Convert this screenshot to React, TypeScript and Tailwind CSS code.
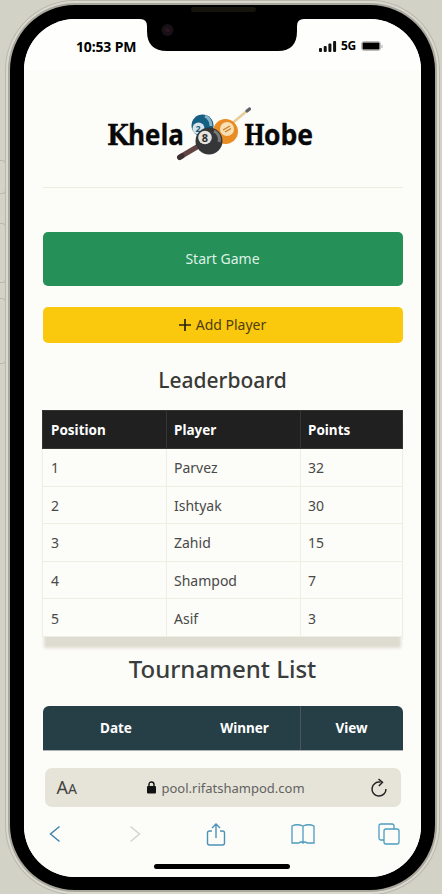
const players = [
  ["1", "Parvez", "32"],
  ["2", "Ishtyak", "30"],
  ["3", "Zahid", "15"],
  ["4", "Shampod", "7"],
  ["5", "Asif", "3"],
];

function Logo() {
  return (
    <svg className="h-[64px] w-[220px]" viewBox="0 0 220 64" role="img">
      <g fill="#080808" stroke="#080808" strokeWidth="0.3" fontWeight="700">
        <text x="6" y="43" fontSize="28" fontFamily="DejaVu Serif, serif" textLength="22" lengthAdjust="spacingAndGlyphs">K</text>
        <text x="27" y="43" fontSize="28" fontFamily="Open Sans, sans-serif" textLength="56" lengthAdjust="spacingAndGlyphs">hela</text>
        <text x="143" y="43" fontSize="28" fontFamily="DejaVu Serif, serif" textLength="21" lengthAdjust="spacingAndGlyphs">H</text>
        <text x="163" y="43" fontSize="28" fontFamily="Open Sans, sans-serif" textLength="49" lengthAdjust="spacingAndGlyphs">obe</text>
      </g>
      <path d="M128 24 L147 8" stroke="#e8cd98" strokeWidth="2.6" />
      <path d="M146 9 L148.5 7" stroke="#606068" strokeWidth="3.2" strokeLinecap="round" />
      <path d="M79 55 L101 42" stroke="#634443" strokeWidth="5" strokeLinecap="round" />
      <path d="M78.5 55.5 L81 54" stroke="#3d3033" strokeWidth="5" strokeLinecap="round" />
      <circle cx="101.500" cy="23.500" r="11" fill="#155f83" />
      <path d="M104 14 Q110 17 110 24" stroke="#86b4c5" strokeWidth="3" fill="none" />
      <circle cx="97.500" cy="26.500" r="6" fill="#d9e5ea" />
      <text x="94.500" y="30" fontSize="9" fontWeight="700" fontFamily="Open Sans, sans-serif" fill="#155f83">2</text>
      <circle cx="124.500" cy="29.500" r="12.500" fill="#e98c24" />
      <circle cx="126" cy="27" r="7" fill="#f8dfb5" />
      <path d="M122 28 L129 24 M124 30 L130 26.500" stroke="#cf7d20" strokeWidth="1.400" />
      <circle cx="108" cy="39" r="13.500" fill="#353638" />
      <path d="M113 29 Q120 33 118 40" stroke="#77797b" strokeWidth="3" fill="none" />
      <circle cx="104" cy="35.500" r="6.800" fill="#e5e4df" />
      <text x="100.800" y="39.500" fontSize="11" fontWeight="700" fontFamily="Open Sans, sans-serif" fill="#303030">8</text>
    </svg>
  );
}

function StatusBar() {
  return (
    <div className="flex h-[51px] shrink-0 items-start bg-[#fefefc] pl-[52px] pr-[38px] pt-[18px] text-black">
      <span className="text-[14px] font-bold leading-[20px] tracking-[-0.15px]">10:53 PM</span>
      <div className="ml-auto flex h-[18px] items-center">
        <svg className="mr-[4px] h-[12px] w-[18px]" viewBox="0 0 18 12" fill="#111">
          <rect x="0" y="8" width="3" height="4" rx="1" />
          <rect x="4.700" y="6" width="3" height="6" rx="1" />
          <rect x="9.400" y="3.500" width="3" height="8.500" rx="1" />
          <rect x="14.100" y="1" width="3" height="11" rx="1" />
        </svg>
        <span className="mr-[4px] w-[16px] text-[12px] font-bold leading-[18px] tracking-[-0.3px]">5G</span>
        <svg className="h-[11px] w-[22px]" viewBox="0 0 22 11">
          <rect x="0.500" y="0.500" width="19" height="9" rx="2.500" fill="#fff" stroke="#bbb" />
          <rect x="1.500" y="1.500" width="17" height="7" rx="1" fill="#000" />
          <path d="M21 4 V7" stroke="#aaa" />
        </svg>
      </div>
    </div>
  );
}

function Leaderboard() {
  return (
    <table className="h-[227px] w-[360px] table-fixed border-collapse text-left text-[14px] leading-[18px] text-[#494947] shadow-[0_13px_3px_-2px_#dedbd0]">
      <colgroup>
        <col className="w-[124px]" />
        <col className="w-[134px]" />
        <col className="w-[102px]" />
      </colgroup>
      <thead>
        <tr className="h-[38px] bg-[#202020] text-[13.5px] text-white">
          <th className="border border-[#353531] px-2 font-bold">Position</th>
          <th className="border border-[#353531] px-[7px] font-bold">Player</th>
          <th className="border border-[#353531] px-[7px] font-bold">Points</th>
        </tr>
      </thead>
      <tbody>
        {players.map(([position, name, points]) => (
          <tr key={position} className="h-[37.6px] bg-[#fcfcf9]">
            <td className="border border-[#efeee2] px-2 pt-[2px]">{position}</td>
            <td className="border border-[#efeee2] px-[7px] pt-[2px]">{name}</td>
            <td className="border border-[#efeee2] px-[7px] pt-[2px]">{points}</td>
          </tr>
        ))}
      </tbody>
    </table>
  );
}

function BrowserBar() {
  return (
    <footer className="flex h-[121px] shrink-0 flex-col bg-[#fcfcf9] pt-[12px]">
      <div className="mx-auto flex h-[39px] w-[356px] items-center rounded-[7px] bg-[#e6e4d9] pl-[12px] pr-[13px] text-[#44443f]">
        <div className="flex w-[90px] items-baseline">
          <span className="text-[18px] leading-[24px]">A</span>
          <span className="text-[14px] leading-[24px]">A</span>
        </div>
        <svg className="mr-[6px] h-[13px] w-[9px]" viewBox="0 0 9 13">
          <rect y="5" width="9" height="7.500" rx="1" fill="#111" />
          <path d="M2 6 V3.500 Q2 1 4.500 1 Q7 1 7 3.500 V6" fill="none" stroke="#111" strokeWidth="1.400" />
        </svg>
        <span className="w-[144px] whitespace-nowrap text-[13px] leading-[20px] text-[#62625f]">pool.rifatshampod.com</span>
        <svg className="ml-auto h-[20px] w-[18px]" viewBox="0 0 18 20" fill="none" stroke="#252525" strokeWidth="1.500">
          <path d="M10.500 4.200 A7 7 0 1 0 16 11" />
          <path d="M8.500 1 L12.500 4.300 L8.800 8" />
        </svg>
      </div>
      <div className="mt-[13px] flex h-[28px] items-center pl-[25px] pr-[21px]">
        <svg className="h-[18px] w-[12px]" viewBox="0 0 12 18" fill="none" stroke="#4384ad" strokeWidth="1.500"><path d="M10.500 1.500 L1.500 9 L10.500 16.500" /></svg>
        <svg className="ml-[68px] h-[18px] w-[12px]" viewBox="0 0 12 18" fill="none" stroke="#d5d4ca" strokeWidth="1.500"><path d="M1.500 1.500 L10.500 9 L1.500 16.500" /></svg>
        <svg className="ml-[65px] h-[25px] w-[20px]" viewBox="0 0 20 25" fill="none" stroke="#4e91b7" strokeWidth="1.400"><path d="M6 9 H3.500 Q1.500 9 1.500 11 V21 Q1.500 23 3.500 23 H16.500 Q18.500 23 18.500 21 V11 Q18.500 9 16.500 9 H14 M10 16 V2 M6 6 L10 2 L14 6" /></svg>
        <svg className="ml-auto h-[22px] w-[24px]" viewBox="0 0 24 22" fill="none" stroke="#4e9cc0" strokeWidth="1.300"><path d="M12 3 Q6 .5 1 3 V20 H8 Q10 18 12 20 Q14 18 16 20 H23 V3 Q18 .5 12 3 V19" /></svg>
        <svg className="ml-[63px] h-[22px] w-[22px]" viewBox="0 0 22 22" fill="none" stroke="#4e9cc0" strokeWidth="1.300"><rect x="6" y="6" width="15" height="15" rx="2" /><path d="M6 17 H3 Q1 17 1 15 V3 Q1 1 3 1 H14 Q16 1 16 3 V6" /></svg>
      </div>
      <div className="ml-[130px] mt-[16px] h-[5px] w-[136px] rounded-full bg-black" />
    </footer>
  );
}

function PhoneButtons() {
  return (
    <div className="flex h-full w-[10px] shrink-0 flex-col pt-[160px]">
      <div className="h-[34px] w-[6px] rounded-r-sm border border-l-0 border-[#b8b7b2]" />
      <div className="mt-[29px] h-[60px] w-[6px] rounded-r-sm border border-l-0 border-[#b8b7b2]" />
      <div className="mt-[15px] h-[66px] w-[6px] rounded-r-sm border border-l-0 border-[#b8b7b2]" />
    </div>
  );
}

export default function App() {
  return (
    <div className="flex h-[894px] w-[442px] overflow-hidden bg-[#d3d2c7] font-['Noto_Sans','Open_Sans',sans-serif]">
      <PhoneButtons />
      <div className="relative mt-[5px] h-[885px] w-[425px] shrink-0 rounded-[65px] bg-black p-[14px] pb-[13px] shadow-[0_0_0_2px_#aaa89d,0_0_0_4px_#dad9d0,0_0_0_5px_#bbb9ae]">
        <main className="flex h-[858px] w-[397px] flex-col overflow-hidden rounded-[51px] bg-[#fcfcf9]">
          <StatusBar />
          <div className="flex min-h-0 flex-1 flex-col items-center overflow-hidden">
            <div className="flex h-[118px] w-[360px] shrink-0 justify-center border-b border-[#eeeedb] pt-[32px] pr-[24px]"><Logo /></div>
            <button className="mt-[44px] h-[54px] w-[360px] shrink-0 rounded-[5px] bg-[#259057] text-[14px] leading-[20px] text-[#dff1e6]">Start Game</button>
            <button className="mt-[21px] flex h-[36px] w-[360px] shrink-0 items-center justify-center gap-[5px] rounded-[5px] bg-[#fac90d] text-[14px] leading-[20px] text-[#513d12]">
              <svg className="h-[12px] w-[12px]" viewBox="0 0 12 12"><path d="M6 0 V12 M0 6 H12" stroke="#272510" strokeWidth="1.700" /></svg>
              Add Player
            </button>
            <h2 className="mt-[22px] h-[45px] shrink-0 text-[21px] font-medium leading-[30px] text-[#393936]">Leaderboard</h2>
            <Leaderboard />
            <h1 className="mt-[14px] h-[55px] shrink-0 text-[24px] font-medium leading-[36px] text-[#393d3c]">Tournament List</h1>
            <div className="grid h-[45px] w-[360px] shrink-0 grid-cols-[147px_110px_103px] overflow-hidden rounded-t-[6px] border-b border-[#acb2b1] bg-[#263f47] text-center text-[13.5px] font-bold leading-[45px] text-white">
              <span>Date</span><span>Winner</span><span className="border-l border-[#4c555c]">View</span>
            </div>
          </div>
          <BrowserBar />
        </main>
        <svg className="absolute left-[130px] top-[13px] h-[34px] w-[164px]" viewBox="0 0 164 34">
          <path d="M0 0 V1 Q7 1 7 8 V13 Q7 33 27 33 H138 Q157 33 157 13 V8 Q157 1 164 1 V0 Z" fill="#000" />
          <circle cx="27.500" cy="12" r="6" fill="#171017" />
          <circle cx="27.500" cy="12" r="2.500" fill="#29131d" />
        </svg>
        <div className="absolute left-[181px] top-[2px] h-[5px] w-[65px] rounded-full bg-[#14140b]" />
      </div>
    </div>
  );
}
